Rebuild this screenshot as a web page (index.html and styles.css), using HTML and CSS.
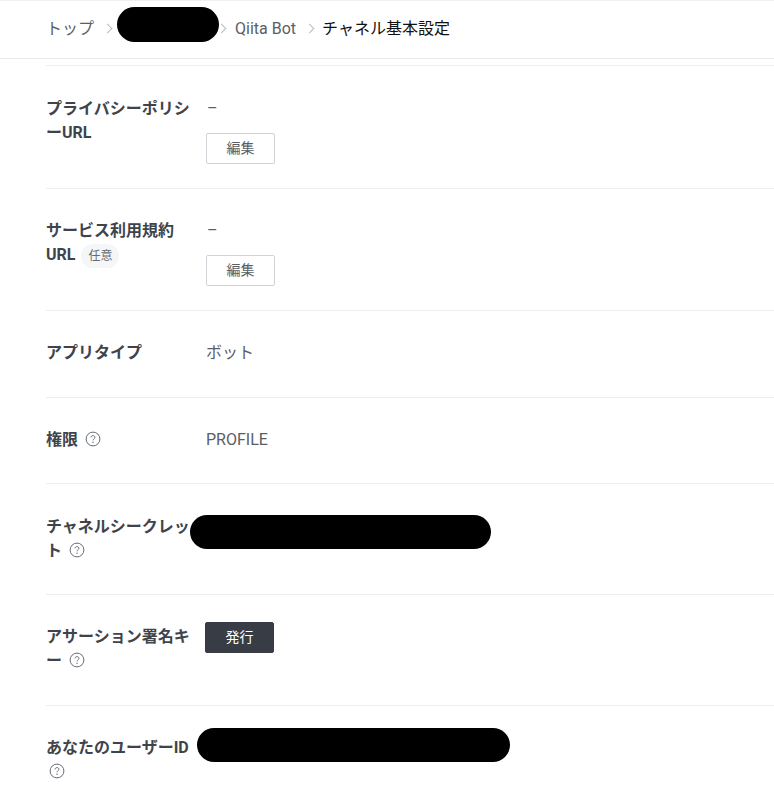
FILE: index.html
```html
<!DOCTYPE html>
<html lang="ja">
<head>
    <meta charset="UTF-8">
    <meta name="viewport" content="width=device-width, initial-scale=1.0">
    <title>チャネル基本設定</title>
    <link rel="stylesheet" href="styles.css">
</head>
<body>
    <svg class="sprite" width="0" height="0">
        <symbol id="help" viewBox="0 0 16 16">
            <circle cx="8" cy="8" r="6.9" fill="none" stroke="currentColor" stroke-width="1"/>
            <path d="M6.1 6.4c0-1.1.8-1.8 1.9-1.8s1.9.7 1.9 1.7c0 1.5-1.9 1.5-1.9 3" fill="none" stroke="currentColor" stroke-width="1"/>
            <circle cx="8" cy="11.2" r=".7" fill="currentColor"/>
        </symbol>
    </svg>

    <nav class="breadcrumb">
        <a class="crumb">トップ</a>
        <span class="crumb-sep"></span>
        <a class="crumb crumb-hidden"><span class="redact redact-crumb"></span></a>
        <span class="crumb-sep"></span>
        <a class="crumb">Qiita Bot</a>
        <span class="crumb-sep"></span>
        <span class="crumb crumb-current">チャネル基本設定</span>
    </nav>

    <main class="settings">
        <div class="row row-edit row-first">
            <div class="row-label">プライバシーポリシーURL</div>
            <div class="row-value">
                <div class="dash">–</div>
                <button class="btn">編集</button>
            </div>
        </div>
        <div class="row row-edit">
            <div class="row-label">
                <div>サービス利用規約</div>
                <span>URL</span>
                <span class="badge">任意</span>
            </div>
            <div class="row-value">
                <div class="dash">–</div>
                <button class="btn">編集</button>
            </div>
        </div>
        <div class="row">
            <div class="row-label">アプリタイプ</div>
            <div class="row-value">ボット</div>
        </div>
        <div class="row row-short">
            <div class="row-label">権限 <svg class="help"><use href="#help"/></svg></div>
            <div class="row-value">PROFILE</div>
        </div>
        <div class="row row-low">
            <div class="row-label">チャネルシークレット <svg class="help"><use href="#help"/></svg></div>
            <div class="row-value"><span class="redact redact-secret"></span></div>
        </div>
        <div class="row">
            <div class="row-label">アサーション署名キー <svg class="help"><use href="#help"/></svg></div>
            <div class="row-value"><button class="btn btn-dark">発行</button></div>
        </div>
        <div class="row row-last">
            <div class="row-label">あなたのユーザーID <svg class="help"><use href="#help"/></svg></div>
            <div class="row-value"><span class="redact redact-userid"></span></div>
        </div>
    </main>
</body>
</html>
```

FILE: styles.css
```css
body {
    margin: 0;
    background: #fff;
    color: #5a5e64;
    font-family: Roboto, "Noto Sans CJK JP", sans-serif;
    font-size: 16px;
    line-height: 24px;
}

.sprite {
    display: block;
}

.breadcrumb {
    display: flex;
    align-items: center;
    height: 55px;
    padding: 0 0 2px 46px;
    border-top: 1px solid #f0f1f3;
    border-bottom: 1px solid #e8eaec;
}

.crumb {
    color: #5a5e64;
    position: relative;
}

.crumb-hidden {
    width: 87px;
    height: 24px;
}

.crumb-current {
    margin-left: -1px;
    color: #111;
}

.crumb-sep {
    width: 6px;
    height: 6px;
    margin: 0 10px;
    border-top: 1.5px solid #b7bcc4;
    border-right: 1.5px solid #b7bcc4;
    transform: rotate(45deg);
}

.settings {
    margin-left: 46px;
    margin-top: 6px;
    border-top: 1px solid #eceef0;
}

.row {
    display: flex;
    padding: 30px 0 32px;
    border-bottom: 1px solid #eceef0;
}

.row-edit {
    padding-bottom: 24px;
}

.row-first {
    padding-top: 31px;
}

.row-short {
    padding-bottom: 31px;
}

.row-low {
    padding: 31px 0;
}

.row-last {
    border-bottom: 0;
    padding-bottom: 0;
}

.row-label {
    width: 144px;
    flex: none;
    margin-right: 16px;
    font-weight: 700;
    color: #3f444b;
    line-break: loose;
}

.row-value {
    position: relative;
    flex: 1;
}

.dash {
    height: 24px;
    margin-bottom: 12px;
    padding-left: 1px;
}

.btn {
    display: block;
    width: 69px;
    height: 31px;
    padding: 0 0 3px;
    background: #fff;
    border: 1px solid #d0d3d8;
    border-radius: 2px;
    color: #5a5e64;
    font-family: inherit;
    font-size: 14px;
}

.btn-dark {
    margin: -3px 0 0 -1px;
    background: #383d45;
    border-color: #383d45;
    color: #fff;
}

.badge {
    display: inline-block;
    height: 24px;
    padding: 0 7px;
    margin: 1px 0 0 2px;
    background: #f5f6f8;
    border-radius: 12px;
    color: #666b72;
    font-size: 12px;
    font-weight: 400;
    line-height: 24px;
    vertical-align: top;
}

.help {
    width: 16px;
    height: 16px;
    margin-left: 3px;
    color: #666b72;
    vertical-align: -2px;
}

/* black blocks covering private values */
.redact {
    position: absolute;
    display: block;
    background: #000;
    border-radius: 18px;
}

.redact-crumb {
    left: -4px;
    top: -10px;
    width: 102px;
    height: 35px;
}

.redact-secret {
    left: -16px;
    top: 0;
    width: 301px;
    height: 34px;
}

.redact-userid {
    left: -9px;
    top: -8px;
    width: 313px;
    height: 34px;
}
```
